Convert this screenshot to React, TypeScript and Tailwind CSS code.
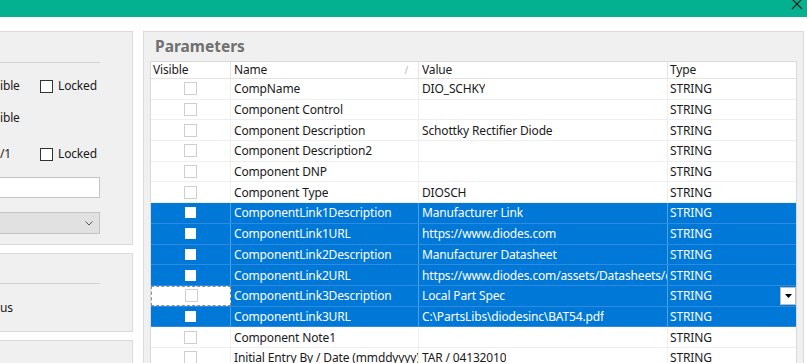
import React from "react";

type Row = { name: string; value: string; sel?: boolean; focus?: boolean };

const rows: Row[] = [
  { name: "CompName", value: "DIO_SCHKY" },
  { name: "Component Control", value: "" },
  { name: "Component Description", value: "Schottky Rectifier Diode" },
  { name: "Component Description2", value: "" },
  { name: "Component DNP", value: "" },
  { name: "Component Type", value: "DIOSCH" },
  { name: "ComponentLink1Description", value: "Manufacturer Link", sel: true },
  { name: "ComponentLink1URL", value: "https://www.diodes.com", sel: true },
  { name: "ComponentLink2Description", value: "Manufacturer Datasheet", sel: true },
  { name: "ComponentLink2URL", value: "https://www.diodes.com/assets/Datasheets/ds11005.pdf", sel: true },
  { name: "ComponentLink3Description", value: "Local Part Spec", sel: true, focus: true },
  { name: "ComponentLink3URL", value: "C:\\PartsLibs\\diodesinc\\BAT54.pdf", sel: true },
  { name: "Component Note1", value: "" },
  { name: "Initial Entry By / Date (mmddyyyy)", value: "TAR / 04132010" },
];

function Check({ sel }: { sel?: boolean }) {
  if (sel) return <div className="w-[11px] h-[11px] bg-white" />;
  return <div className="w-[13px] h-[13px] border border-[#cfcfcf] bg-white" />;
}

function TableRow({ r }: { r: Row }) {
  const sel = r.sel;
  const base = sel ? "bg-[#0078d7] text-white" : "bg-white text-[#1a1a1a]";
  const hb = sel ? "border-b border-[#2f8be0]" : "border-b border-[#efefef]";
  const vb = sel ? "border-r border-[#4da1e6]" : "border-r border-[#efefef]";
  return (
    <div className={`flex h-[20.7px] ${hb}`}>
      <div
        className={`w-[80px] shrink-0 flex items-center justify-center ${
          r.focus ? "bg-white border border-dashed border-[#8a8a8a]" : `${base} ${vb}`
        }`}
      >
        {r.focus ? <Check /> : <Check sel={sel} />}
      </div>
      <div className={`w-[188px] shrink-0 flex items-center pl-[3px] pt-px overflow-hidden whitespace-nowrap ${base} ${vb}`}>
        <span className="overflow-hidden">{r.name}</span>
      </div>
      <div className={`w-[249px] shrink-0 flex items-center pl-[3px] pt-px overflow-hidden whitespace-nowrap ${base} ${vb}`}>
        <span className="overflow-hidden">{r.value}</span>
      </div>
      <div className={`flex-1 flex items-center pl-[2px] pt-px relative ${base}`}>
        STRING
        {r.focus && (
          <div className="absolute right-0 top-[1px] bottom-[1px] w-[16px] bg-white border border-[#bdbdbd] flex items-center justify-center">
            <svg width="7" height="4" viewBox="0 0 7 4">
              <path d="M0 0 L7 0 L3.5 4 Z" fill="#000" />
            </svg>
          </div>
        )}
      </div>
    </div>
  );
}

function LockedBox() {
  return (
    <div className="flex items-center gap-[5px]">
      <div className="w-[13px] h-[13px] border border-[#333] bg-white" />
      <span>Locked</span>
    </div>
  );
}

export default function App() {
  return (
    <div
      className="w-[807px] h-[363px] overflow-hidden bg-white text-[12px] tracking-[-0.15px] text-[#1a1a1a] relative"
      style={{ fontFamily: '"Noto Sans", "Open Sans", sans-serif' }}
    >
      <div className="h-[17px] bg-[#03b190] relative">
        <svg className="absolute right-[4px] top-[-2px]" width="12" height="12" viewBox="0 0 12 12">
          <path d="M1 1 L11 11 M11 1 L1 11" stroke="#1a1a1a" strokeWidth="1.1" />
        </svg>
      </div>
      <div className="h-[14px]" />
      <div className="flex">
        {/* Left column */}
        <div className="w-[133px] shrink-0 flex flex-col gap-[8px]">
          <div className="h-[214px] bg-[#f0f0f0] border border-l-0 border-[#dadada] relative">
            <div className="mt-[30px] w-[100px] h-px bg-[#d2d2d2]" />
            <div className="mt-[15px] flex items-center h-[16px]">
              <span className="w-[40px]">ible</span>
              <LockedBox />
            </div>
            <div className="mt-[16px] h-[16px] flex items-center">ible</div>
            <div className="mt-[20px] flex items-center h-[16px]">
              <span className="w-[40px]">/1</span>
              <LockedBox />
            </div>
            <div className="mt-[15px] w-[100px] h-[21px] bg-white border border-l-0 border-[#c4c4c4]" />
            <div className="mt-[14px] w-[100px] h-[22px] bg-[#e1e1e1] border border-l-0 border-[#c4c4c4] flex items-center justify-end pr-[6px]">
              <svg width="8" height="5" viewBox="0 0 8 5">
                <path d="M0.5 0.5 L4 4 L7.5 0.5" stroke="#555" strokeWidth="1" fill="none" />
              </svg>
            </div>
          </div>
          <div className="h-[79px] bg-[#f0f0f0] border border-l-0 border-[#dadada]">
            <div className="mt-[29px] w-[100px] h-px bg-[#d2d2d2]" />
            <div className="mt-[16px] h-[16px] flex items-center">us</div>
          </div>
          <div className="h-[40px] bg-[#f0f0f0] border border-l-0 border-[#dadada]" />
        </div>
        <div className="w-[10px] shrink-0" />
        {/* Right panel */}
        <div className="w-[661px] shrink-0 h-[340px] bg-[#f0f0f0] border border-[#dadada] px-[6px]">
          <div className="h-[29px] pl-[5px] flex items-center pt-[1px] text-[15.5px] tracking-normal font-bold text-[#707070]">
            Parameters
          </div>
          <div className="w-[647px] bg-white border-l border-r border-[#d9d9d9]">
            <div className="flex h-[18px] border-b border-[#e3e3e3] border-t border-t-[#d9d9d9] bg-white">
              <div className="w-[80px] shrink-0 pl-[2px] flex items-center border-r border-[#e3e3e3]">Visible</div>
              <div className="w-[188px] shrink-0 pl-[3px] flex items-center border-r border-[#e3e3e3] relative">
                Name
                <span className="absolute right-[10px] top-[1px] text-[10px] text-[#b8b8b8]">/</span>
              </div>
              <div className="w-[249px] shrink-0 pl-[3px] flex items-center border-r border-[#e3e3e3]">Value</div>
              <div className="flex-1 pl-[2px] flex items-center">Type</div>
            </div>
            {rows.map((r, i) => (
              <TableRow key={i} r={r} />
            ))}
          </div>
        </div>
      </div>
    </div>
  );
}
